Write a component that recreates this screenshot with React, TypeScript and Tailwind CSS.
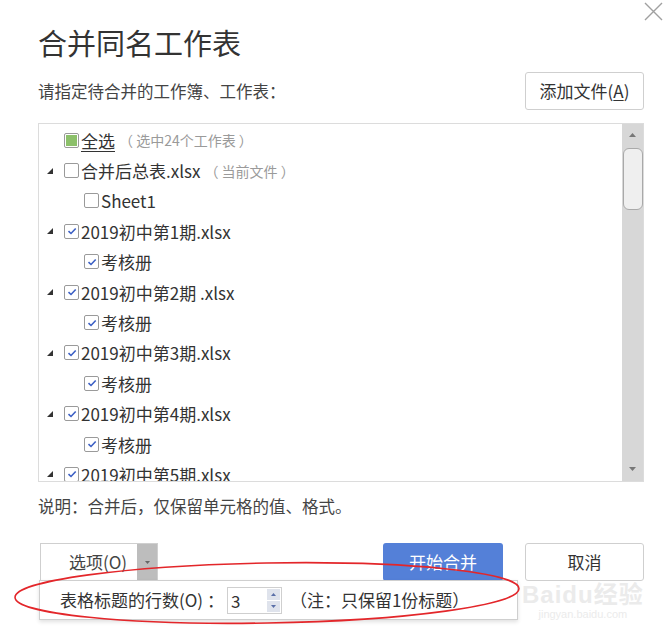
import React from "react";

type Row = {
  label: string;
  note?: string;
  level: 0 | 1 | 2;
  state: "all" | "on" | "off";
  expander?: boolean;
  underline?: boolean;
};

const rows: Row[] = [
  { label: "全选", note: "（ 选中24个工作表 ）", level: 0, state: "all", underline: true },
  { label: "合并后总表.xlsx", note: "（ 当前文件 ）", level: 1, state: "off", expander: true },
  { label: "Sheet1", level: 2, state: "off" },
  { label: "2019初中第1期.xlsx", level: 1, state: "on", expander: true },
  { label: "考核册", level: 2, state: "on" },
  { label: "2019初中第2期 .xlsx", level: 1, state: "on", expander: true },
  { label: "考核册", level: 2, state: "on" },
  { label: "2019初中第3期.xlsx", level: 1, state: "on", expander: true },
  { label: "考核册", level: 2, state: "on" },
  { label: "2019初中第4期.xlsx", level: 1, state: "on", expander: true },
  { label: "考核册", level: 2, state: "on" },
  { label: "2019初中第5期.xlsx", level: 1, state: "on", expander: true },
];

function Check({ state }: { state: Row["state"] }) {
  return (
    <span className="flex h-[15px] w-[15px] shrink-0 items-center justify-center rounded-[2px] border border-[#9a9a9a] bg-white">
      {state === "all" && <span className="h-[11px] w-[11px] bg-[#8cc06a]" />}
      {state === "on" && (
        <svg width="10" height="8" viewBox="0 0 10 8">
          <path d="M1.5 4.2 L4 6.5 L8.7 1.5" fill="none" stroke="#3b5fc4" strokeWidth="1.6" />
        </svg>
      )}
    </span>
  );
}

function TreeRow({ row }: { row: Row }) {
  return (
    <div className="flex h-[30.4px] shrink-0 items-center">
      <span
        className={
          row.level === 2
            ? "flex w-[45px] shrink-0"
            : "flex w-[25px] shrink-0 items-center pl-[8px]"
        }
      >
        {row.expander && (
          <svg width="6" height="6" viewBox="0 0 6 6">
            <polygon points="6,0 6,6 0,6" fill="#333" />
          </svg>
        )}
      </span>
      <Check state={row.state} />
      <span
        className={
          "ml-[2px] whitespace-nowrap text-[17px] leading-none text-[#333]" +
          (row.underline ? " underline underline-offset-[3px]" : "")
        }
      >
        {row.label}
      </span>
      {row.note && (
        <span className="ml-[4px] whitespace-pre text-[14px] leading-none text-[#9a9a9a]">
          {row.note}
        </span>
      )}
    </div>
  );
}

export default function App() {
  return (
    <div className="relative h-[637px] w-[672px] overflow-hidden bg-white font-['Noto_Sans_CJK_SC',sans-serif] text-[#333]">
      {/* close */}
      <svg
        className="absolute right-[9px] top-[2px]"
        width="19"
        height="19"
        viewBox="0 0 19 19"
      >
        <path d="M1 1 L18 18 M18 1 L1 18" stroke="#a0a0a0" strokeWidth="1.4" />
      </svg>

      <div className="flex flex-col pl-[38px] pr-[28px]">
        <h1 className="pt-[22px] text-[29px] font-normal leading-[40px] text-[#333]">
          合并同名工作表
        </h1>

        <div className="mt-[10px] flex items-center justify-between">
          <span className="text-[16.5px] leading-none text-[#444]">
            请指定待合并的工作簿、工作表：
          </span>
          <button className="flex h-[38px] w-[119px] items-center justify-center rounded-[3px] border border-[#cfcfcf] bg-white text-[17px] text-[#333]">
            添加文件(<span className="underline underline-offset-[2px]">A</span>)
          </button>
        </div>

        <div className="mt-[13px] flex h-[359px] border border-[#dcdcdc]">
          <div className="flex flex-1 flex-col overflow-hidden pt-[1px]">
            {rows.map((r, i) => (
              <TreeRow key={i} row={r} />
            ))}
          </div>
          <div className="flex w-[21px] flex-col items-center bg-[#d7d7d7]">
            <svg className="mt-[9px]" width="7" height="4" viewBox="0 0 7 4">
              <polygon points="3.5,0 7,4 0,4" fill="#777" />
            </svg>
            <div className="mt-[11px] h-[62px] w-[20px] rounded-[6px] border border-[#a9a9a9] bg-[#efefef]" />
            <div className="flex-1" />
            <svg className="mb-[10px]" width="7" height="4" viewBox="0 0 7 4">
              <polygon points="0,0 7,0 3.5,4" fill="#777" />
            </svg>
          </div>
        </div>

        <p className="mt-[12px] text-[16.5px] leading-[24px] text-[#444]">
          说明：合并后，仅保留单元格的值、格式。
        </p>

        <div className="mt-[25px] flex items-center">
          <div className="relative ml-[2px]">
            <div className="flex h-[38px] w-[118px] border border-[#cfcfcf] bg-white">
              <span className="flex flex-1 items-center pl-[28px] text-[17px] text-[#444]">
                选项(O)
              </span>
              <span className="flex w-[20px] items-center justify-center bg-[#bdbdbd]">
                <svg width="5" height="3" viewBox="0 0 5 3">
                  <polygon points="0,0 5,0 2.5,3" fill="#666" />
                </svg>
              </span>
            </div>
            <div className="absolute left-[-1px] top-[37px] flex h-[40px] w-[479px] items-center border border-[#cfcfcf] bg-white pl-[20px] shadow-[0_2px_4px_rgba(0,0,0,0.12)]">
              <span className="whitespace-nowrap text-[17px] text-[#333]">
                表格标题的行数(O) ：
              </span>
              <div className="ml-[3px] flex h-[27px] w-[55px] items-center border border-[#cfcfcf] bg-white pl-[3px]">
                <span className="flex-1 text-[17px] leading-none text-[#333]">3</span>
                <div className="mr-[1px] flex h-[23px] w-[13px] flex-col gap-[1px]">
                  <span className="flex flex-1 items-center justify-center bg-[#dfe3ec]">
                    <svg width="5" height="3" viewBox="0 0 5 3">
                      <polygon points="2.5,0 5,3 0,3" fill="#5a6fa8" />
                    </svg>
                  </span>
                  <span className="flex flex-1 items-center justify-center bg-[#dfe3ec]">
                    <svg width="5" height="3" viewBox="0 0 5 3">
                      <polygon points="0,0 5,0 2.5,3" fill="#5a6fa8" />
                    </svg>
                  </span>
                </div>
              </div>
              <span className="ml-[8px] whitespace-nowrap text-[17px] text-[#333]">
                （注：只保留1份标题）
              </span>
            </div>
          </div>

          <button className="ml-auto flex h-[38px] w-[120px] items-center justify-center rounded-[3px] bg-[#5480d8] text-[17px] text-white">
            开始合并
          </button>
          <button className="ml-[22px] flex h-[38px] w-[119px] items-center justify-center rounded-[3px] border border-[#cfcfcf] bg-white text-[17px] text-[#333]">
            取消
          </button>
        </div>
      </div>

      {/* watermark */}
      <div className="pointer-events-none absolute left-[522px] top-[583px] flex flex-col items-center font-['Liberation_Sans','Noto_Sans_CJK_SC',sans-serif] text-[#ebebeb]">
        <span className="text-[24px] font-bold leading-[24px] tracking-[1px]">
          Baidu经验
        </span>
        <span className="text-[11px] leading-[14px]">jingyan.baidu.com</span>
      </div>

      {/* red mark */}
      <svg
        className="pointer-events-none absolute left-0 top-0"
        width="672"
        height="637"
      >
        <ellipse
          cx="267"
          cy="593"
          rx="252"
          ry="30"
          transform="rotate(-1 267 593)"
          fill="none"
          stroke="#e3262a"
          strokeWidth="1.6"
        />
      </svg>
    </div>
  );
}
